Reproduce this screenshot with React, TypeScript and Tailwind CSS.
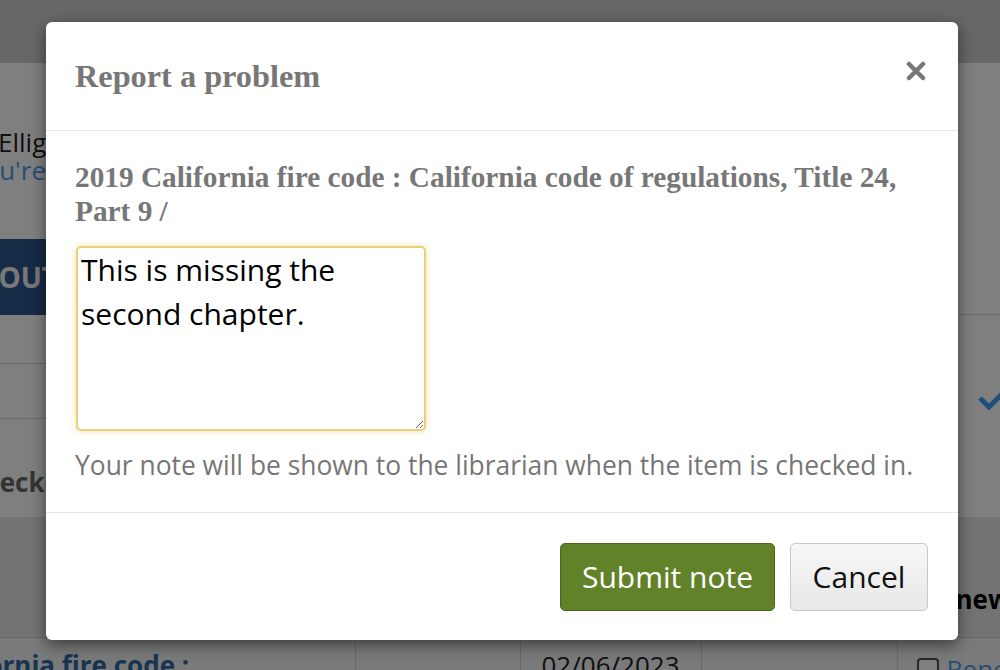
import { useEffect, useRef } from 'react';

export default function App() {
  const noteRef = useRef<HTMLTextAreaElement>(null);

  useEffect(() => {
    const el = noteRef.current;
    if (el) {
      el.focus();
      el.setSelectionRange(el.value.length, el.value.length);
    }
  }, []);

  return (
    <div className="relative h-[670px] w-[1000px] overflow-hidden bg-white font-['Open_Sans',sans-serif]">
      {/* Page behind the dialog */}
      <div className="h-[63px] bg-[#cecece]" />
      <div className="flex h-[454px]">
        <div className="-ml-[100px] w-[520px] shrink-0 pt-[65px]">
          <p className="pl-[98px] text-[26px] leading-[28px] text-[#222]">Elligible for renewal</p>
          <p className="pl-[69px] text-[26px] leading-[28px] text-[#4a9ee6]">You're all set for now</p>
          <div className="mt-[55px] flex h-[76px] items-center bg-[#2c568c] pl-[7px] text-[28px] font-bold text-[#f0f0f0]">
            CHECKOUT
          </div>
          <div className="h-[49px] border-b border-[#d6d6d6]" />
          <div className="h-[55px] border-b border-[#d6d6d6]" />
          <p className="mt-[48px] pl-[66px] text-[26px] font-bold leading-[30px] text-[#666]">Checked out</p>
        </div>
        <div className="flex-1">
          <div className="h-[252px] border-b border-[#d6d6d6]" />
          <svg className="ml-[557px] mt-[70px]" width="34" height="26" viewBox="0 0 34 26" fill="none">
            <path d="M3 13 L12 22 L31 3" stroke="#3e9cf0" strokeWidth="5" />
          </svg>
        </div>
      </div>
      <table className="-ml-[150px] w-[1180px] table-fixed border-collapse text-[26px]">
        <colgroup>
          <col className="w-[505px]" />
          <col className="w-[165px]" />
          <col className="w-[181px]" />
          <col className="w-[196px]" />
          <col className="w-[133px]" />
        </colgroup>
        <thead>
          <tr className="h-[120px] border-b border-[#cccccc] bg-[#e6e6e6]">
            <th className="px-[12px] pb-[18px] text-left align-bottom">Title</th>
            <th className="pb-[18px] align-bottom">Type</th>
            <th className="pb-[18px] align-bottom">Due date</th>
            <th className="pb-[18px] align-bottom">Fines</th>
            <th className="pb-[18px] pl-[26px] text-left align-bottom">Renew</th>
          </tr>
        </thead>
        <tbody>
          <tr className="bg-[#f4f4f4] align-top">
            <td className="border-r border-[#d4d4d4] px-[12px] pt-[9px] font-bold leading-[36px] text-[#2f6aa6]">
              2019 California fire code :
            </td>
            <td className="border-r border-[#d4d4d4]" />
            <td className="border-r border-[#d4d4d4] pt-[9px] text-center leading-[36px] text-[#222]">02/06/2023</td>
            <td className="border-r border-[#d4d4d4]" />
            <td className="pl-[19px] pt-[13px]">
              <div className="flex items-center gap-[8px] leading-[36px] text-[#4a9ee6]">
                <span className="h-[22px] w-[22px] rounded-[4px] border-2 border-[#555] bg-white" />
                Renew
              </div>
            </td>
          </tr>
        </tbody>
      </table>

      {/* Dialog */}
      <div className="absolute inset-0 bg-black/50 pl-[46px] pt-[22px]">
        <div className="flex h-[618px] w-[912px] flex-col rounded-[6px] bg-white shadow-[0_5px_15px_rgba(0,0,0,0.5)]">
          <div className="flex h-[109px] shrink-0 items-center justify-between border-b border-[#e5e5e5] px-[29px]">
            <h4 className="font-['Liberation_Serif',serif] text-[32.3px] font-bold leading-none text-[#777]">
              Report a problem
            </h4>
            <button className="mb-[10px] mr-[3px] text-[#777]" aria-label="Close">
              <svg width="20" height="20" viewBox="0 0 20 20" fill="none">
                <path d="M3 3 L17 17 M17 3 L3 17" stroke="currentColor" strokeWidth="4.5" strokeLinecap="round" />
              </svg>
            </button>
          </div>

          <div className="h-[382px] shrink-0 border-b border-[#e5e5e5] px-[29px] pt-[29px]">
            <p className="font-['Liberation_Serif',serif] text-[29.3px] font-bold leading-[34px] text-[#777]">
              2019 California fire code : California code of regulations, Title 24, Part 9 /
            </p>
            <textarea
              ref={noteRef}
              defaultValue="This is missing the second chapter."
              className="ml-[1px] mt-[18px] block h-[185px] w-[350px] rounded-[5px] border-2 border-[#eecd76] px-[3px] py-0 text-[30px] leading-[44px] text-black caret-black shadow-[0_0_7px_rgba(232,214,140,0.7)] outline-none"
            />
            <p className="mt-[16px] text-[26.4px] leading-[36px] text-[#767676]">
              Your note will be shown to the librarian when the item is checked in.
            </p>
          </div>

          <div className="flex flex-1 items-center justify-end gap-[15px] px-[30px]">
            <button className="h-[68px] w-[215px] rounded-[5px] border border-[#4b6a1d] bg-[#62822a] text-[30px] text-white">
              Submit note
            </button>
            <button className="h-[68px] w-[138px] rounded-[5px] border border-[#c8c8c8] bg-linear-to-b from-[#f7f7f7] to-[#e8e8e8] text-[30px] text-[#111]">
              Cancel
            </button>
          </div>
        </div>
      </div>
    </div>
  );
}
